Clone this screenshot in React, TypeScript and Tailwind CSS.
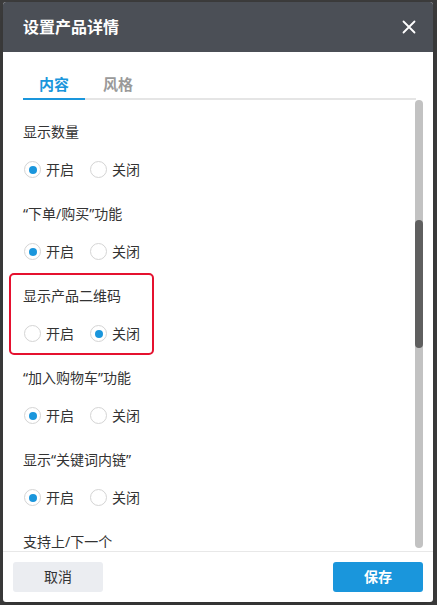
import React, { useState } from 'react';

type Opt = 'on' | 'off';

const sections: { label: string; value: Opt; highlight?: boolean }[] = [
  { label: '显示数量', value: 'on' },
  { label: '“下单/购买”功能', value: 'on' },
  { label: '显示产品二维码', value: 'off', highlight: true },
  { label: '“加入购物车”功能', value: 'on' },
  { label: '显示“关键词内链”', value: 'on' },
  { label: '支持上/下一个', value: 'on' },
];

const Radio: React.FC<{ checked: boolean; label: string; onClick: () => void }> = ({ checked, label, onClick }) => (
  <button onClick={onClick} className="flex items-center gap-[5px] outline-none">
    <span className="w-[17px] h-[17px] rounded-full border border-[#d4d4d4] bg-white flex items-center justify-center">
      {checked && <span className="w-[8px] h-[8px] rounded-full bg-[#1a96dc]" />}
    </span>
    <span className="text-[14px] text-[#333]">{label}</span>
  </button>
);

export default function App() {
  const [values, setValues] = useState<Opt[]>(sections.map(s => s.value));
  const [tab, setTab] = useState(0);

  const setValue = (i: number, v: Opt) => {
    const next = [...values];
    next[i] = v;
    setValues(next);
  };

  return (
    <div
      className="w-[437px] h-[605px] bg-[#3b3b3b] pl-[3px] pt-[2px] overflow-hidden"
      style={{ fontFamily: '"Noto Sans", "Noto Sans CJK SC", sans-serif' }}
    >
      <div className="w-[430px] h-[600px] bg-white rounded-[3px] overflow-hidden flex flex-col shadow-lg">
        {/* header */}
        <div className="h-[50px] shrink-0 bg-[#4b4f56] flex items-center justify-between pl-[20px] pr-[17px]">
          <span className="text-white text-[16px] font-bold">设置产品详情</span>
          <svg width="14" height="14" viewBox="0 0 14 14" className="text-white">
            <path d="M1.5 1.5 L12.5 12.5 M12.5 1.5 L1.5 12.5" stroke="currentColor" strokeWidth="1.8" strokeLinecap="round" />
          </svg>
        </div>

        {/* tabs */}
        <div className="shrink-0 pl-[20px] pr-[17px] pt-[22px]">
          <div className="flex border-b-2 border-[#e5e5e5]">
            {['内容', '风格'].map((t, i) => (
              <button
                key={t}
                onClick={() => setTab(i)}
                className={`w-[62px] h-[26px] -mb-[2px] border-b-2 text-[15px] font-bold leading-none pb-[4px] ${
                  tab === i ? 'text-[#1a96dc] border-[#1a96dc]' : 'text-[#9a9a9a] border-transparent'
                } ${i === 1 ? 'ml-[2px]' : ''}`}
              >
                {t}
              </button>
            ))}
          </div>
        </div>

        {/* body */}
        <div className="flex-1 min-h-0 flex">
          <div className="flex-1 overflow-hidden">
            <div className="pt-[22px] pl-[20px]">
              {sections.map((s, i) => (
                <div key={s.label} className="h-[82px] relative">
                  {s.highlight && (
                    <div className="absolute left-[-14px] top-[-13px] w-[145px] h-[82px] border-2 border-[#e5112f] rounded-[5px] pointer-events-none" />
                  )}
                  <div className="text-[14px] text-[#333] leading-[20px]">{s.label}</div>
                  <div className="flex items-center gap-[16px] mt-[17px] pl-[1px]">
                    <Radio checked={values[i] === 'on'} label="开启" onClick={() => setValue(i, 'on')} />
                    <Radio checked={values[i] === 'off'} label="关闭" onClick={() => setValue(i, 'off')} />
                  </div>
                </div>
              ))}
            </div>
          </div>
          {/* scrollbar */}
          <div className="w-[8px] mr-[10px] mb-[3px] rounded-full bg-[#c2c2c2] relative">
            <div className="absolute left-0 top-[120px] w-[8px] h-[128px] rounded-full bg-[#5f5f5f]" />
          </div>
        </div>

        {/* footer */}
        <div className="h-[51px] shrink-0 border-t border-[#e8e8e8] flex items-center justify-between px-[10px]">
          <button className="w-[90px] h-[30px] rounded-[3px] bg-[#ebedf1] text-[14px] leading-[30px] text-[#333]">取消</button>
          <button className="w-[90px] h-[30px] rounded-[3px] bg-[#1a96dc] text-[14px] leading-[30px] text-white font-bold">保存</button>
        </div>
      </div>
    </div>
  );
}
